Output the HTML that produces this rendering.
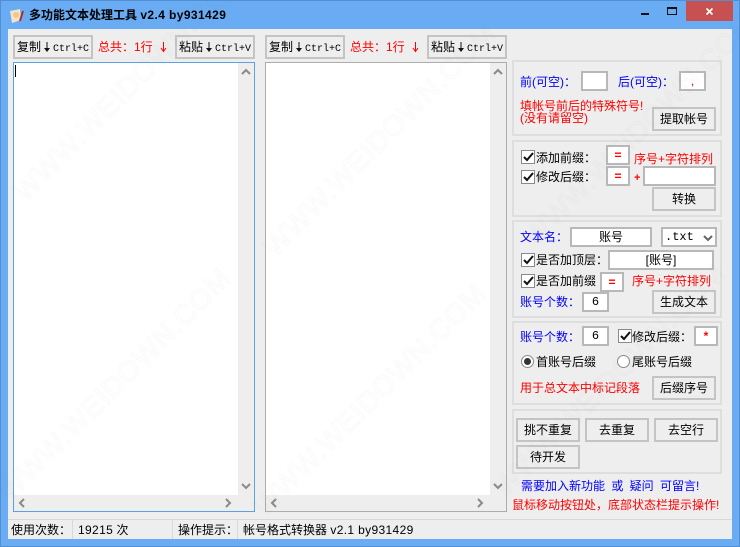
<!DOCTYPE html>
<html><head><meta charset="utf-8"><style>
html,body{margin:0;padding:0}
body{width:740px;height:547px;overflow:hidden;position:relative;background:#69acf3;font-family:"Liberation Sans","WenQuanYi Zen Hei","Noto Sans CJK SC",sans-serif;font-size:12px;color:#000}
div{position:absolute;box-sizing:border-box}
.t{white-space:nowrap;line-height:16px;height:16px}
.b{background:#eee;border:2px solid #c4c4c4;text-align:center;line-height:20px;white-space:nowrap;font-size:12px}
.k{text-align:left;padding-left:2px}
.i{background:#fff;border:2px solid #b8b8b8;text-align:center;line-height:16px;white-space:nowrap}
.p{border:2px solid #dedede;left:512px;width:210px}
.r{color:#f00}.u{color:#00f}
.e{font-weight:bold}
.c{width:14px;height:14px;background:#fff;border:1px solid #8a8a8a}
.m{font-family:"Liberation Mono",monospace;font-size:10px}
.sb{background:#eee}
svg{position:absolute;overflow:visible}
svg.ar{position:static;vertical-align:-2px}
.l{letter-spacing:.35px}
.w{white-space:nowrap;font-size:28px;line-height:30px;font-family:"Liberation Sans",sans-serif;color:transparent;-webkit-text-stroke:1px rgba(120,120,120,.045);transform:translate(-50%,-50%) rotate(-45deg);letter-spacing:1px}
</style></head><body>
<div style="left:0;top:0;width:740px;height:547px;border:1px solid #4f8fd2"></div>
<svg style="left:9px;top:8px" width="16" height="16"><path d="M1 3l10-2 1 11-9 3z" fill="#f3e3c8"/><circle cx="7" cy="7" r="3" fill="#ecc98c"/><path d="M11 13l3-10" stroke="#b32a2a" stroke-width="2"/></svg>
<div class="t" style="left:29px;top:7px;font-weight:bold">多功能文本处理工具 <span style="letter-spacing:.4px">v2.4 by931429</span></div>
<div style="left:641px;top:13px;width:8px;height:2px;background:#111"></div>
<div style="left:667px;top:7px;width:10px;height:8px;border:1px solid #111;border-top-width:2px"></div>
<div style="left:686px;top:1px;width:47px;height:20px;background:#c75050"></div>
<svg style="left:706px;top:8px" width="8" height="7"><path d="M0.5 0.5l6 6M6.5 0.5l-6 6" stroke="#fff" stroke-width="1.6"/></svg>

<div style="left:8px;top:29px;width:724px;height:510px;background:#eee"></div>

<div class="b k" style="left:13px;top:35px;width:80px;height:24px">复制<svg class="ar" width="12" height="12"><path d="M6 1v8" stroke="#111" stroke-width="1"/><path d="M3 7h6l-3 4z" fill="#111"/></svg><span class="m">Ctrl+C</span></div>
<div class="t r" style="left:98px;top:39px">总共&#xFF1A;1行</div>
<svg style="left:160px;top:41px" width="7" height="12"><path d="M3.5 1v9M1 7l2.5 3.5L6 7" fill="none" stroke="#f00"/></svg>
<div class="b k" style="left:175px;top:35px;width:80px;height:24px">粘贴<svg class="ar" width="12" height="12"><path d="M6 1v8" stroke="#111" stroke-width="1"/><path d="M3 7h6l-3 4z" fill="#111"/></svg><span class="m">Ctrl+V</span></div>
<div class="b k" style="left:265px;top:35px;width:80px;height:24px">复制<svg class="ar" width="12" height="12"><path d="M6 1v8" stroke="#111" stroke-width="1"/><path d="M3 7h6l-3 4z" fill="#111"/></svg><span class="m">Ctrl+C</span></div>
<div class="t r" style="left:350px;top:39px">总共&#xFF1A;1行</div>
<svg style="left:412px;top:41px" width="7" height="12"><path d="M3.5 1v9M1 7l2.5 3.5L6 7" fill="none" stroke="#f00"/></svg>
<div class="b k" style="left:427px;top:35px;width:80px;height:24px">粘贴<svg class="ar" width="12" height="12"><path d="M6 1v8" stroke="#111" stroke-width="1"/><path d="M3 7h6l-3 4z" fill="#111"/></svg><span class="m">Ctrl+V</span></div>

<div style="left:13px;top:62px;width:242px;height:450px;background:#fff;border:1px solid #5aa2e6"></div>
<div style="left:15px;top:65px;width:1px;height:12px;background:#000"></div>
<div class="sb" style="left:238px;top:63px;width:16px;height:448px"></div>
<div class="sb" style="left:14px;top:495px;width:240px;height:16px"></div>
<div style="left:265px;top:62px;width:242px;height:450px;background:#fff;border:1px solid #adadad"></div>
<div class="sb" style="left:490px;top:63px;width:16px;height:448px"></div>
<div class="sb" style="left:266px;top:495px;width:240px;height:16px"></div>
<svg style="left:0;top:0" width="740" height="547"><g fill="none" stroke="#8a8a8a" stroke-width="2"><path d="M242 74l4-4 4 4M242 484l4 4 4-4M24 499l-4 4 4 4M226 499l4 4-4 4M494 74l4-4 4 4M494 484l4 4 4-4M276 499l-4 4 4 4M478 499l4 4-4 4"/></g></svg>

<div class="p" style="top:60px;height:76px"></div>
<div class="t u" style="left:520px;top:74px">前(可空)&#xFF1A;</div>
<div class="i" style="left:581px;top:71px;width:27px;height:20px"></div>
<div class="t u" style="left:618px;top:74px">后(可空)&#xFF1A;</div>
<div class="i r" style="left:679px;top:71px;width:27px;height:20px">,</div>
<div class="t r" style="left:520px;top:98px">填帐号前后的特殊符号!</div>
<div class="t r" style="left:520px;top:110px">(没有请留空)</div>
<div class="b" style="left:652px;top:107px;width:64px;height:24px">提取帐号</div>

<div class="p" style="top:140px;height:77px"></div>
<div class="c" style="left:521px;top:150px"></div><div class="t" style="left:536px;top:150px">添加前缀&#xFF1A;</div>
<div class="i r e" style="left:606px;top:145px;width:24px;height:20px">=</div>
<div class="t r" style="left:634px;top:151px">序号+字符排列</div>
<div class="c" style="left:521px;top:170px"></div><div class="t" style="left:536px;top:169px">修改后缀&#xFF1A;</div>
<div class="i r e" style="left:606px;top:166px;width:24px;height:20px">=</div>
<div class="t r e" style="left:634px;top:170px;font-size:11px">+</div>
<div class="i" style="left:643px;top:166px;width:73px;height:20px"></div>
<div class="b" style="left:652px;top:187px;width:64px;height:24px">转换</div>

<div class="p" style="top:220px;height:98px"></div>
<div class="t u" style="left:520px;top:229px">文本名&#xFF1A;</div>
<div class="i" style="left:570px;top:227px;width:82px;height:20px">账号</div>
<div class="i" style="left:661px;top:227px;width:56px;height:20px;text-align:left;padding-left:2px;font-family:'Liberation Mono',monospace;font-size:12px">.txt</div>
<svg style="left:703px;top:235px" width="10" height="6"><path d="M1 1l4 4 4-4" fill="none" stroke="#666" stroke-width="2"/></svg>
<div class="c" style="left:521px;top:253px"></div><div class="t" style="left:536px;top:252px">是否加顶层&#xFF1A;</div>
<div class="i" style="left:608px;top:250px;width:106px;height:20px">[账号]</div>
<div class="c" style="left:521px;top:274px"></div><div class="t" style="left:536px;top:273px">是否加前缀</div>
<div class="i r e" style="left:600px;top:272px;width:24px;height:20px">=</div>
<div class="t r" style="left:632px;top:273px">序号+字符排列</div>
<div class="t u" style="left:520px;top:294px">账号个数&#xFF1A;</div>
<div class="i" style="left:582px;top:292px;width:27px;height:20px;font-family:'Liberation Mono',monospace">6</div>
<div class="b" style="left:652px;top:290px;width:64px;height:24px">生成文本</div>

<div class="p" style="top:321px;height:84px"></div>
<div class="t u" style="left:520px;top:329px">账号个数&#xFF1A;</div>
<div class="i" style="left:582px;top:326px;width:27px;height:20px;font-family:'Liberation Mono',monospace">6</div>
<div class="c" style="left:618px;top:329px"></div><div class="t" style="left:632px;top:329px">修改后缀&#xFF1A;</div>
<div class="i r e" style="left:694px;top:326px;width:24px;height:20px">*</div>
<div style="left:521px;top:355px;width:13px;height:13px;border-radius:50%;background:#fff;border:1px solid #8a8a8a"></div>
<div style="left:524px;top:358px;width:7px;height:7px;border-radius:50%;background:#333"></div>
<div class="t" style="left:536px;top:354px">首账号后缀</div>
<div style="left:617px;top:355px;width:13px;height:13px;border-radius:50%;background:#fff;border:1px solid #8a8a8a"></div>
<div class="t" style="left:632px;top:354px">尾账号后缀</div>
<div class="t r" style="left:520px;top:380px">用于总文本中标记段落</div>
<div class="b" style="left:652px;top:376px;width:64px;height:24px">后缀序号</div>

<div class="p" style="top:409px;height:65px"></div>
<div class="b" style="left:516px;top:418px;width:64px;height:24px">挑不重复</div>
<div class="b" style="left:585px;top:418px;width:64px;height:24px">去重复</div>
<div class="b" style="left:654px;top:418px;width:64px;height:24px">去空行</div>
<div class="b" style="left:516px;top:445px;width:64px;height:24px">待开发</div>
<div class="t u" style="left:521px;top:478px;word-spacing:3px">需要加入新功能 或 疑问 可留言!</div>
<div class="t r" style="left:512px;top:497px">鼠标移动按钮处&#xFF0C;底部状态栏提示操作!</div>

<svg style="left:0;top:0" width="740" height="547"><g fill="none" stroke="#111" stroke-width="2"><path d="M524 157l3 3 6-7M524 177l3 3 6-7M524 260l3 3 6-7M524 281l3 3 6-7M621 336l3 3 6-7"/></g></svg>

<div style="left:8px;top:519px;width:724px;height:1px;background:#d8d8d8"></div>
<div style="left:72px;top:520px;width:1px;height:19px;background:#d8d8d8"></div>
<div style="left:172px;top:520px;width:1px;height:19px;background:#d8d8d8"></div>
<div style="left:237px;top:520px;width:1px;height:19px;background:#d8d8d8"></div>
<div class="t" style="left:11px;top:522px">使用次数&#xFF1A;</div>
<div class="t" style="left:78px;top:522px"><span class="l">19215</span> 次</div>
<div class="t" style="left:178px;top:522px">操作提示&#xFF1A;</div>
<div class="t" style="left:243px;top:522px">帐号格式转换器 <span class="l">v2.1 by931429</span></div>

<div class="w" style="left:130px;top:85px">WWW.WEIDOWN.COM</div>
<div class="w" style="left:115px;top:385px">WWW.WEIDOWN.COM</div>
<div class="w" style="left:380px;top:140px">WWW.WEIDOWN.COM</div>
<div class="w" style="left:370px;top:400px">WWW.WEIDOWN.COM</div>
<div class="w" style="left:640px;top:130px">WWW.WEIDOWN.COM</div>
<div class="w" style="left:610px;top:380px">WWW.WEIDOWN.COM</div>
</body></html>
